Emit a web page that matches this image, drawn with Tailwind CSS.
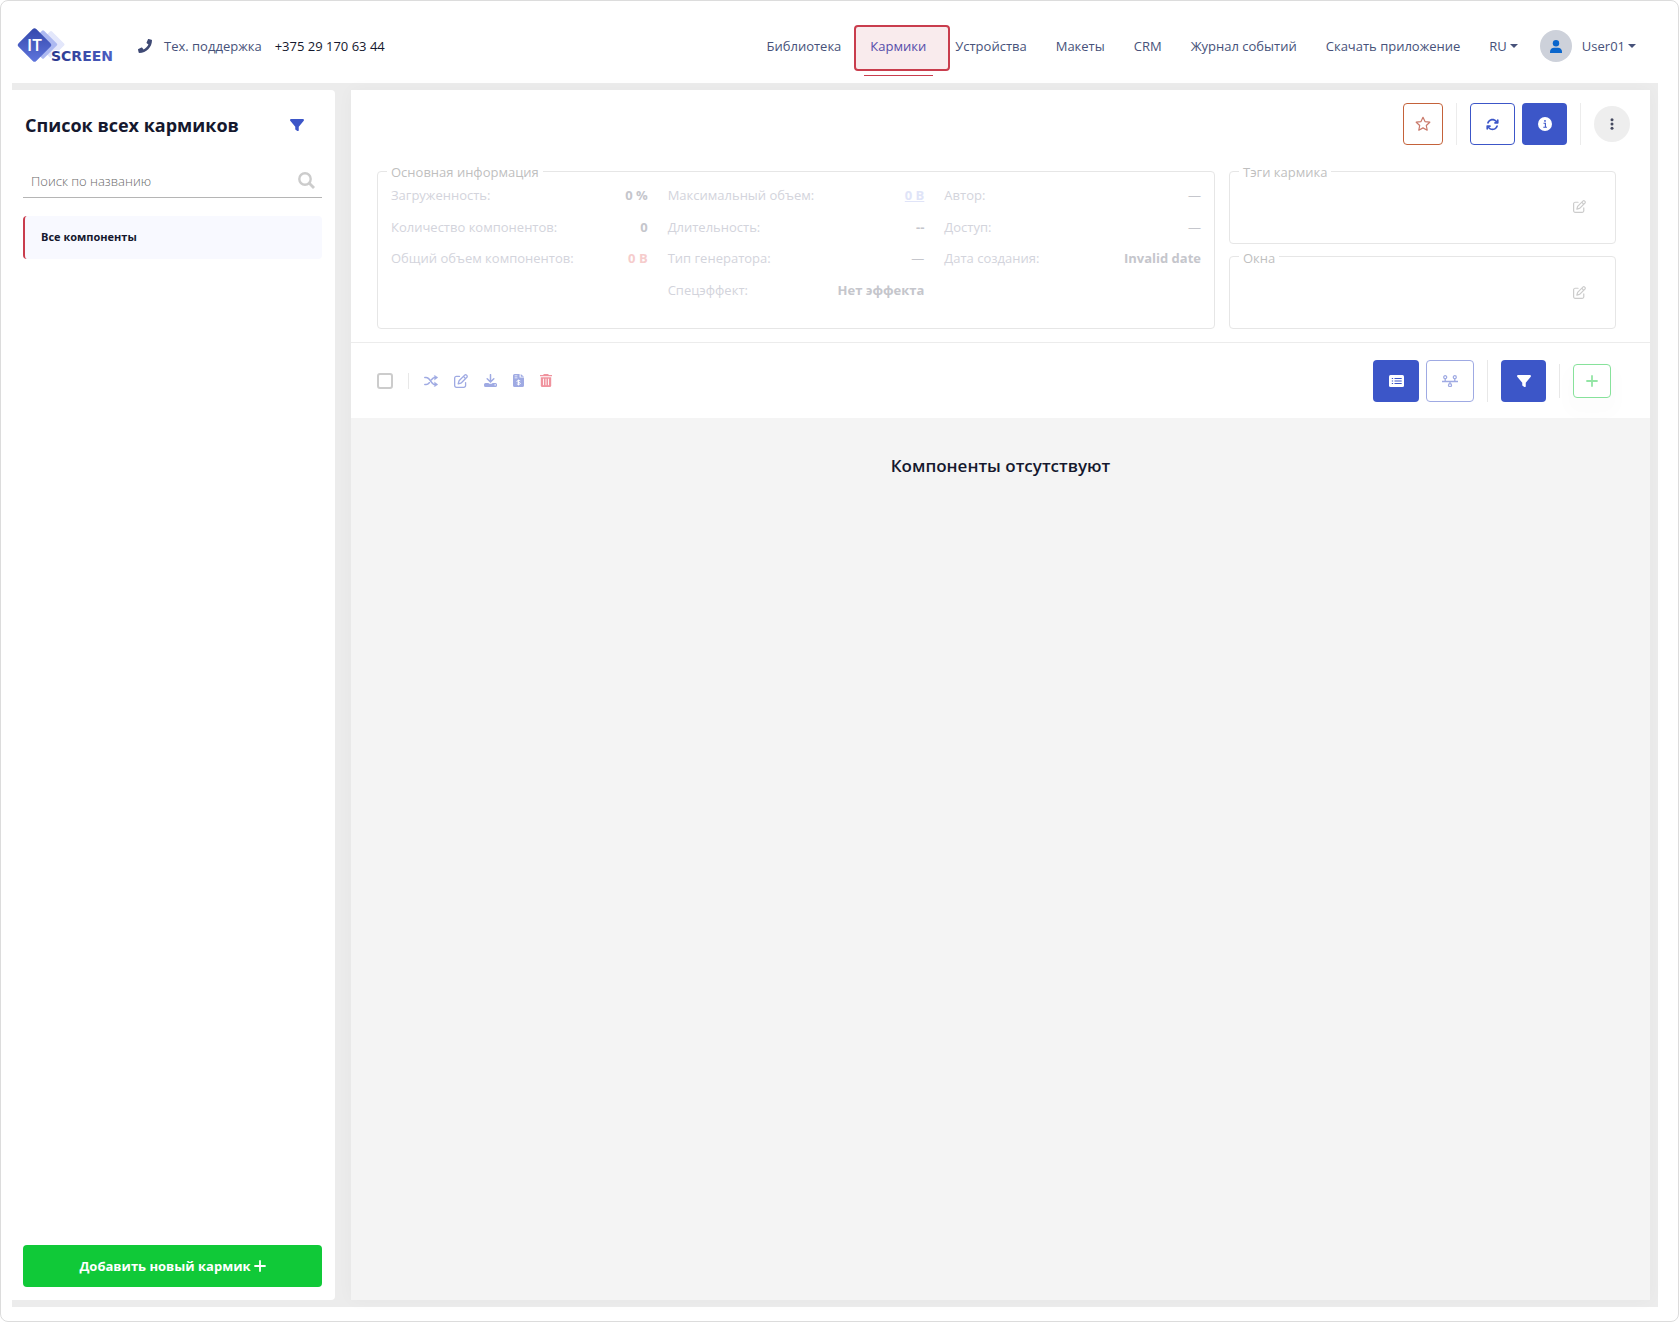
<!DOCTYPE html>
<html lang="ru">
<head>
<meta charset="utf-8">
<title>IT Screen — Кармики</title>
<script src="https://cdn.jsdelivr.net/npm/@tailwindcss/browser@4"></script>
</head>
<body class="bg-white font-['Open_Sans','Noto_Sans',sans-serif] text-[13px] leading-5 text-[#47527a]">
<svg class="hidden" aria-hidden="true">
  <symbol id="filter" viewBox="0 0 512 512"><path d="M3.9 54.900C10.500 40.900 24.500 32 40 32h432c15.500 0 29.500 8.900 36.100 22.900s4.600 30.500-5.200 42.500L320 320.900V448c0 12.100-6.800 23.200-17.700 28.600s-23.800 4.300-33.500-3l-64-48c-8.100-6-12.800-15.500-12.800-25.600v-79.100L9 97.300C-.7 85.400-2.800 68.800 3.900 54.900z"/></symbol>
  <symbol id="edit" viewBox="0 0 512 512"><path d="M441 58.900 453.100 71c9.400 9.400 9.400 24.600 0 33.900L424 134.100 377.900 88 407 58.900c9.400-9.400 24.600-9.400 33.900 0zM209.800 256.200 344 121.900 390.100 168 255.800 302.200c-2.900 2.900-6.500 5-10.400 6.100l-58.500 16.700 16.700-58.500c1.100-3.900 3.200-7.500 6.100-10.400zM373.100 25 175.800 222.200c-8.700 8.700-15 19.400-18.300 31.100l-28.600 100c-2.400 8.400-.1 17.400 6.100 23.600s15.200 8.500 23.600 6.100l100-28.600c11.800-3.400 22.500-9.700 31.100-18.300L487 138.900c28.100-28.100 28.100-73.700 0-101.800L474.900 25c-28.100-28.100-73.700-28.100-101.800 0zM88 64C39.400 64 0 103.400 0 152v272c0 48.600 39.400 88 88 88h272c48.600 0 88-39.400 88-88V312c0-13.300-10.700-24-24-24s-24 10.700-24 24v112c0 22.100-17.900 40-40 40H88c-22.100 0-40-17.900-40-40V152c0-22.100 17.900-40 40-40h112c13.300 0 24-10.700 24-24s-10.700-24-24-24H88z"/></symbol>
  <symbol id="plus" viewBox="0 0 12 12"><path d="M6 1v10M1 6h10" fill="none" stroke="currentColor" stroke-width="1.800" stroke-linecap="round"/></symbol>
</svg>

<div class="flex min-h-screen flex-col rounded-lg border border-[#dcdcdc] pr-5 pb-[14px] pl-[11px]">
  <header class="flex h-[82px] items-center pt-2 pr-[22px]">
    <a href="#" class="ml-[5px] block" aria-label="IT Screen">
      <svg width="98" height="36" viewBox="0 0 98 36">
        <defs>
          <linearGradient id="dark" x1="0" y1="0" x2="1" y2="1"><stop offset="0" stop-color="#3347ab"/><stop offset="1" stop-color="#6076dd"/></linearGradient>
          <linearGradient id="word" x1="0" y1="0" x2="1" y2="0"><stop offset="0" stop-color="#29378c"/><stop offset="1" stop-color="#4c5fc4"/></linearGradient>
        </defs>
        <rect x="24" y="6.500" width="20" height="20" rx="1.500" transform="rotate(45 34 16.500)" fill="#e3e7fb"/>
        <rect x="15.500" y="6" width="21" height="21" rx="1.500" transform="rotate(45 26 16.500)" fill="#adb9f1"/>
        <rect x="5" y="4.500" width="25" height="25" rx="2.500" transform="rotate(45 17.500 17)" fill="url(#dark)"/>
        <text x="17.500" y="23" text-anchor="middle" font-family="Open Sans" font-weight="600" font-size="17" fill="#fff">IT</text>
        <text x="34" y="33" font-family="DejaVu Sans" font-weight="700" font-size="14" fill="url(#word)" stroke="#fff" stroke-width="2" paint-order="stroke">SCREEN</text>
      </svg>
    </a>
    <svg class="ml-[23px]" width="14" height="14" viewBox="0 0 512 512" fill="#3f4a75"><path d="M493.400 24.600l-104-24c-11.300-2.600-22.900 3.300-27.500 13.900l-48 112c-4.200 9.800-1.400 21.300 6.900 28l60.600 49.600c-36 76.700-98.900 140.500-177.200 177.200l-49.600-60.600c-6.800-8.300-18.200-11.100-28-6.900l-112 48C3.900 366.500-2 378.100.6 389.400l24 104C27.100 504.200 36.700 512 48 512c256.100 0 464-207.500 464-464 0-11.200-7.700-20.900-18.600-23.400z"/></svg>
    <a href="#" class="ml-3">Тех. поддержка</a>
    <a href="tel:+375291706344" class="ml-[13px] text-[#15182e]">+375 29 170 63 44</a>
    <nav class="ml-auto flex items-center gap-[29px]">
      <a href="#">Библиотека</a>
      <a href="#" class="relative text-[#4a4fb5]">
        <span class="absolute -top-[11px] -right-[24px] -left-[16px] h-[46px] rounded border-2 border-[#c93d4d] bg-[#c93d4d]/10"></span>
        <span class="absolute -right-[7px] -bottom-[20px] -left-[6px] h-px bg-[#c93d4d]"></span>
        Кармики
      </a>
      <a href="#">Устройства</a>
      <a href="#">Макеты</a>
      <a href="#">CRM</a>
      <a href="#">Журнал событий</a>
      <a href="#">Скачать приложение</a>
      <button type="button" class="flex items-center gap-[3px]">RU <svg width="8" height="4" viewBox="0 0 8 4" fill="currentColor"><path d="M0 0h8L4 4z"/></svg></button>
    </nav>
    <button type="button" class="ml-[22px] flex items-center gap-[10px]">
      <span class="flex size-8 items-center justify-center rounded-full bg-[#cdd1da]">
        <svg width="12" height="13" viewBox="0 0 12 13" fill="#0a66cc"><circle cx="6" cy="3.200" r="3.200"/><path d="M0 13v-1.500C0 9 2 7.700 4 7.700h4c2 0 4 1.300 4 3.800V13z"/></svg>
      </span>
      <span class="flex items-center gap-[3px]">User01 <svg width="8" height="4" viewBox="0 0 8 4" fill="currentColor"><path d="M0 0h8L4 4z"/></svg></span>
    </button>
  </header>

  <div class="flex flex-1 gap-4 bg-[#ececec] py-[7px] pr-2">
    <aside class="flex w-[323px] shrink-0 flex-col rounded-r bg-white pr-[13px] pb-[13px] pl-[11px]">
      <div class="flex items-center justify-between pt-[23px] pr-[18px] pl-[2px]">
        <h1 class="text-[18px] leading-6 font-bold text-[#15182e]">Список всех кармиков</h1>
        <button type="button" aria-label="Фильтр"><svg width="14" height="14" fill="#3c56c8"><use href="#filter"/></svg></button>
      </div>
      <label class="mt-7 flex h-[33px] items-center border-b border-[#b5b5b5] pr-[7px] pb-px pl-2">
        <input type="search" aria-label="Поиск по названию" placeholder="Поиск по названию" class="min-w-0 flex-1 font-light outline-none placeholder:text-[#6b6b6b]">
        <svg width="17" height="17" viewBox="0 0 17 17" fill="none" stroke="#ccc" stroke-width="2.400"><circle cx="7" cy="7" r="5.700"/><path d="M11.300 11.300 16 16" stroke-width="2.800"/></svg>
      </label>
      <a href="#" class="mt-[18px] flex h-[43px] items-center rounded border-l-2 border-[#c93d4d] bg-[#f8f9ff] pb-px pl-4 text-[11px] font-bold text-[#15182e]">Все компоненты</a>
      <button type="button" class="mt-auto flex h-[42px] items-center justify-center gap-[3px] rounded bg-[#10c938] font-bold text-white">Добавить новый кармик <svg width="12" height="12"><use href="#plus"/></svg></button>
    </aside>

    <main class="flex min-w-0 flex-1 flex-col bg-[#f4f4f4] shadow-[0_0_16px_rgba(0,0,0,0.03)]">
      <section class="border-b border-[#ececec] bg-white pb-[13px]">
        <div class="flex items-center justify-end pt-[13px] pr-5">
          <button type="button" aria-label="В избранное" class="flex h-[42px] w-10 items-center justify-center rounded border border-[#c4623a]">
            <svg width="16" height="16" viewBox="0 0 16 16" fill="none" stroke="#c9796a" stroke-width="1.200" stroke-linejoin="round"><path d="M8 1.300l2 4.300 4.800.6-3.500 3.300.9 4.700L8 11.900l-4.200 2.300.9-4.700L1.200 6.200 6 5.600z"/></svg>
          </button>
          <span class="mx-[13px] h-[42px] w-px bg-[#ececec]"></span>
          <button type="button" aria-label="Обновить" class="flex h-[42px] w-[45px] items-center justify-center rounded border border-[#3c56c8]">
            <svg width="13" height="13" viewBox="0 0 512 512" fill="#3c56c8"><path d="M105.100 202.600c7.700-21.800 20.200-42.300 37.800-59.800 62.500-62.500 163.800-62.500 226.300 0L386.300 160H352c-17.700 0-32 14.300-32 32s14.300 32 32 32h111.500c17.700 0 32-14.300 32-32V80c0-17.700-14.300-32-32-32s-32 14.300-32 32v35.200L414.400 97.600c-87.500-87.500-229.300-87.500-316.800 0C73.200 122 55.600 150.700 44.800 181.400c-5.900 16.700 2.900 34.900 19.500 40.800s34.900-2.900 40.800-19.500zM39 289.300c-5 1.500-9.800 4.200-13.700 8.200-4 4-6.700 8.800-8.100 14-1.200 4.400-1.200 8.700-1.200 8.700v112c0 17.700 14.300 32 32 32s32-14.300 32-32v-35.100l17.600 17.500c87.500 87.400 229.300 87.400 316.700 0 24.400-24.400 42.100-53.100 52.900-83.700 5.900-16.700-2.900-34.900-19.500-40.800s-34.900 2.900-40.800 19.500c-7.700 21.800-20.200 42.300-37.800 59.800-62.500 62.500-163.800 62.500-226.300 0L125.600 352H160c17.700 0 32-14.300 32-32s-14.300-32-32-32H48.400c-4.700 0-6.400.4-9.400 1.300z"/></svg>
          </button>
          <button type="button" aria-label="Информация" class="ml-[7px] flex h-[42px] w-[45px] items-center justify-center rounded bg-[#3c56c8]">
            <svg width="14" height="14" viewBox="0 0 14 14"><circle cx="7" cy="7" r="7" fill="#fff"/><path d="M5.500 6.300h1.900v4M5.300 10.300h3.600" fill="none" stroke="#3c56c8" stroke-width="1.100"/><circle cx="7" cy="3.900" r=".9" fill="#3c56c8"/></svg>
          </button>
          <span class="mx-[13px] h-[42px] w-px bg-[#ececec]"></span>
          <button type="button" aria-label="Ещё" class="flex size-9 items-center justify-center rounded-full bg-[#eee]">
            <svg width="4" height="12" viewBox="0 0 4 12" fill="#454a60"><circle cx="2" cy="1.700" r="1.500"/><circle cx="2" cy="6" r="1.500"/><circle cx="2" cy="10.300" r="1.500"/></svg>
          </button>
        </div>

        <div class="mt-4 flex gap-[14px] pr-[34px] pl-[26px]">
          <fieldset class="min-w-0 flex-1 rounded border border-[#e6e6e6] px-[13px] pt-1 pb-[17px]">
            <legend class="-ml-1 px-1 pt-[2px] leading-[18px] text-[#bfbfbf]">Основная информация</legend>
            <div class="grid h-[126px] grid-cols-3 gap-5 text-[#d3d4dc]">
              <dl class="grid grid-rows-4">
                <div class="flex justify-between"><dt>Загруженность:</dt><dd class="font-bold text-[#c5c6cc]">0 %</dd></div>
                <div class="flex justify-between"><dt>Количество компонентов:</dt><dd class="font-bold text-[#c5c6cc]">0</dd></div>
                <div class="flex justify-between"><dt>Общий объем компонентов:</dt><dd class="font-bold text-[#f6cccc]">0 B</dd></div>
              </dl>
              <dl class="grid grid-rows-4">
                <div class="flex justify-between"><dt>Максимальный объем:</dt><dd class="font-bold"><a href="#" class="text-[#e0e4f8] underline">0 B</a></dd></div>
                <div class="flex justify-between"><dt>Длительность:</dt><dd class="font-bold text-[#c5c6cc]">--</dd></div>
                <div class="flex justify-between"><dt>Тип генератора:</dt><dd class="text-[#c5c6cc]">—</dd></div>
                <div class="flex justify-between"><dt>Спецэффект:</dt><dd class="font-bold text-[#c5c6cc]">Нет эффекта</dd></div>
              </dl>
              <dl class="grid grid-rows-4">
                <div class="flex justify-between"><dt>Автор:</dt><dd class="text-[#c5c6cc]">—</dd></div>
                <div class="flex justify-between"><dt>Доступ:</dt><dd class="text-[#c5c6cc]">—</dd></div>
                <div class="flex justify-between"><dt>Дата создания:</dt><dd class="font-bold text-[#c5c6cc]">Invalid date</dd></div>
              </dl>
            </div>
          </fieldset>
          <div class="flex w-[387px] shrink-0 flex-col gap-[3px]">
            <fieldset class="flex-1 rounded border border-[#e6e6e6] px-[13px]">
              <legend class="-ml-1 px-1 pt-[2px] leading-[18px] text-[#bfbfbf]">Тэги кармика</legend>
              <div class="flex justify-end pt-[19px] pr-4"><button type="button" aria-label="Изменить тэги"><svg width="13" height="13" fill="#ccc"><use href="#edit"/></svg></button></div>
            </fieldset>
            <fieldset class="flex-1 rounded border border-[#e6e6e6] px-[13px]">
              <legend class="-ml-1 px-1 pt-[2px] leading-[18px] text-[#bfbfbf]">Окна</legend>
              <div class="flex justify-end pt-[19px] pr-4"><button type="button" aria-label="Изменить окна"><svg width="13" height="13" fill="#ccc"><use href="#edit"/></svg></button></div>
            </fieldset>
          </div>
        </div>
      </section>

      <section class="flex h-[75px] items-center justify-between bg-white pr-[39px] pl-[26px]">
        <div class="flex items-center">
          <input type="checkbox" aria-label="Выбрать все" class="size-4 appearance-none rounded-[3px] border-2 border-[#ccc]">
          <span class="mr-[15px] ml-[15px] h-4 w-px bg-[#e8e8e8]"></span>
          <div class="flex items-center gap-4 text-[#9faae3]">
            <button type="button" aria-label="Перемешать"><svg width="14" height="12" viewBox="0 0 14 12" fill="none" stroke="currentColor" stroke-width="1.500" stroke-linecap="round"><path d="M.8 2.500h1.400c1.500 0 2.300.8 3.100 1.800l2.600 3.400c.8 1 1.500 1.800 2.800 1.800M.8 9.500h1.400c1.500 0 2.300-.8 3.100-1.800M7.500 4.700c.9-1.300 1.700-2.200 3.200-2.200"/><path d="M10.700.5 13.800 2.500 10.700 4.700zM10.700 7.300 13.800 9.500 10.700 11.600z" fill="currentColor" stroke-width=".5"/></svg></button>
            <button type="button" aria-label="Редактировать"><svg width="14" height="14" fill="currentColor"><use href="#edit"/></svg></button>
            <button type="button" aria-label="Скачать"><svg width="13" height="13" viewBox="0 0 13 13"><path d="M6.500 .7v6.500M3.200 4.800l3.300 3.200 3.300-3.200" fill="none" stroke="currentColor" stroke-width="1.500" stroke-linecap="round"/><path fill-rule="evenodd" d="M1.500 9h2.800a3.600 3.600 0 0 0 4.400 0h2.800A1.500 1.500 0 0 1 13 10.500v1a1.500 1.500 0 0 1-1.500 1.500h-10A1.500 1.500 0 0 1 0 11.500v-1A1.500 1.500 0 0 1 1.500 9zm9 1.300v1.300h1.300v-1.300z" fill="currentColor"/></svg></button>
            <button type="button" aria-label="Счёт"><svg width="11" height="13" viewBox="0 0 10 13" preserveAspectRatio="none"><path fill-rule="evenodd" d="M1.500 0H6v3.500h4v8A1.500 1.500 0 0 1 8.500 13h-7A1.500 1.500 0 0 1 0 11.500v-10A1.500 1.500 0 0 1 1.500 0zM1.500 1.500v.8H4v-.8zm0 2v.8H4v-.8zM7 0l3 2.700H7z" fill="currentColor"/><path d="M6.600 6.800c-1.600-.7-3-.3-3 .6 0 1.300 3.100.6 3.100 2 0 1-1.800 1.200-3.200.5M5 5.600v5.800" fill="none" stroke="#fff" stroke-width=".9"/></svg></button>
            <button type="button" aria-label="Удалить" class="text-[#f0939e]"><svg width="12" height="13" viewBox="0 0 12 13"><path fill="currentColor" d="M3.800 0h4.400l.6.900H12v1.300H0V.9h3.200z"/><path fill="currentColor" d="M.8 3.200h10.400v8.300a1.500 1.500 0 0 1-1.500 1.500H2.300a1.500 1.500 0 0 1-1.500-1.500z"/><path d="M3.500 4.700v6.500M6 4.700v6.500M8.500 4.700v6.500" stroke="#fff" stroke-width=".9"/></svg></button>
          </div>
        </div>
        <div class="flex items-center">
          <button type="button" aria-label="Список" class="flex h-[42px] w-[46px] items-center justify-center rounded bg-[#3c56c8]">
            <svg width="15" height="12" viewBox="0 0 15 12"><rect width="15" height="12" rx="1.500" fill="#fff"/><path d="M5.500 3.500h7.200M5.500 6h7.200M5.500 8.500h7.200M2.800 3.500h1.300M2.800 6h1.300M2.800 8.500h1.300" stroke="#3c56c8" stroke-width="1.100"/></svg>
          </button>
          <button type="button" aria-label="Временная шкала" class="ml-[7px] flex h-[42px] w-12 items-center justify-center rounded border border-[#9faae3]">
            <svg width="16" height="12" viewBox="0 0 16 12" fill="none" stroke="#9faae3" stroke-width="1.300"><path d="M0 6.500h16M3.200 4v2.500M12.800 4v2.500M8 6.500v2" /><circle cx="3.200" cy="2.200" r="1.500"/><circle cx="12.800" cy="2.200" r="1.500"/><circle cx="8" cy="10.200" r="1.500"/></svg>
          </button>
          <span class="mx-[13px] h-[42px] w-px bg-[#e8e8e8]"></span>
          <button type="button" aria-label="Фильтр компонентов" class="flex h-[42px] w-[45px] items-center justify-center rounded bg-[#3c56c8]"><svg width="14" height="14" fill="#fff"><use href="#filter"/></svg></button>
          <span class="mx-[13px] h-[34px] w-px bg-[#e8e8e8]"></span>
          <button type="button" aria-label="Добавить компонент" class="flex h-[34px] w-[38px] items-center justify-center rounded border border-[#87e29b] text-[#93e5a5] shadow-[0_10px_16px_8px_rgba(0,0,0,0.01)]"><svg width="12" height="12"><use href="#plus"/></svg></button>
        </div>
      </section>

      <h2 class="pt-9 text-center text-[17px] leading-6 font-semibold text-[#15182e]">Компоненты отсутствуют</h2>
    </main>
  </div>
</div>
</body>
</html>
